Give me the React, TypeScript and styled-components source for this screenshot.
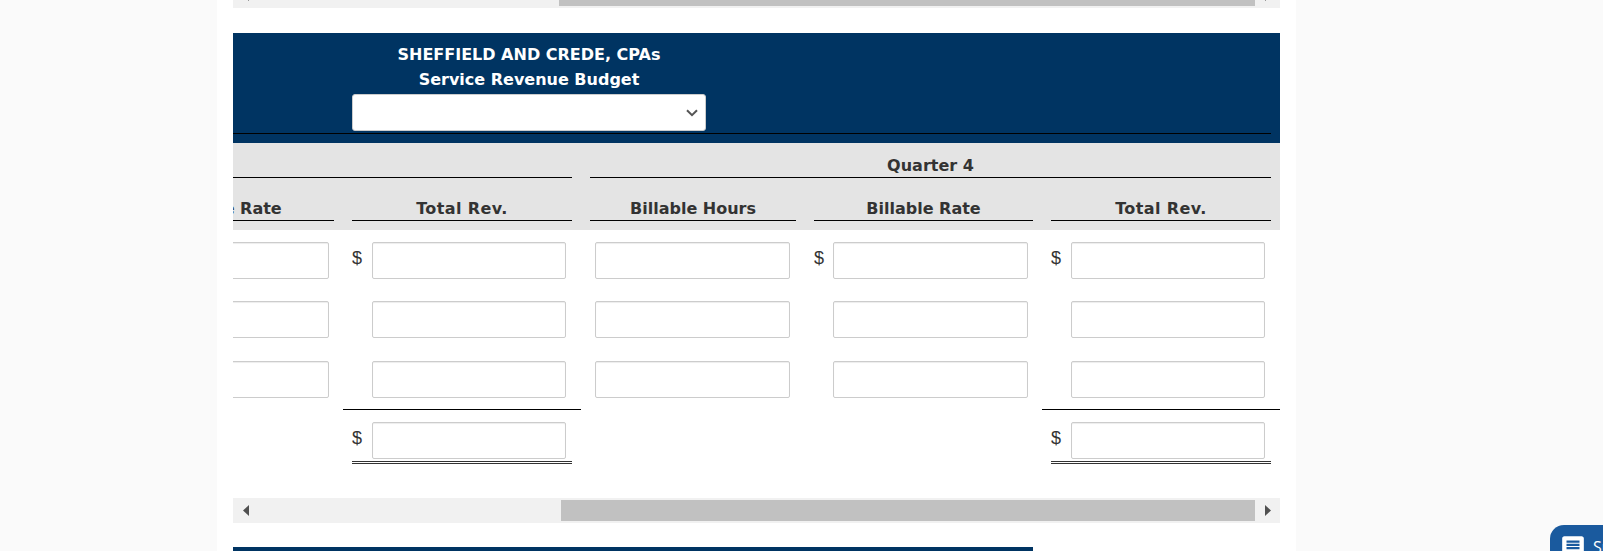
import React from 'react';
import styled, { createGlobalStyle } from 'styled-components';
import { MdMessage } from 'react-icons/md';

const GlobalStyle = createGlobalStyle`
  html, body {
    margin: 0;
    height: 100%;
    overflow: hidden;
    background: #fafafa;
  }
`;

const COLUMNS = '237px 238px 224px 237px 238px';

const Sheet = styled.div`
  width: 1047px;
  min-height: 620px;
  margin: -17px 0 0 217px;
  padding: 0 16px;
  background: #fff;
  font-family: "DejaVu Sans", Verdana, sans-serif;
  color: #333;
`;

const Track = styled.div<{ $top?: boolean }>`
  display: flex;
  height: 25px;
  background: #f1f1f1;
  margin-bottom: ${props => props.$top ? '25px' : '24px'};
`;

const ArrowButton = styled.div`
  flex: 0 0 25px;
  display: flex;
  align-items: center;
  justify-content: center;
`;

const ThumbLane = styled.div`
  flex: 1;
  padding: 2px 0;
  display: flex;
`;

const Thumb = styled.div<{ $offset: number }>`
  flex: 1;
  margin-left: ${props => props.$offset}px;
  background: #c1c1c1;
`;

const Banner = styled.div`
  background: #003462;
  padding: 9px 9px 9px 0;
`;

const BannerInner = styled.div`
  padding: 0 0 2px 119px;
  border-bottom: 1px solid #000;
`;

const TitleBlock = styled.div`
  width: 354px;
  color: #fff;
  font-size: 16px;
  font-weight: 700;
  line-height: 25px;
  text-align: center;
  white-space: nowrap;
  margin-bottom: 2px;
`;

const SelectWrap = styled.div`
  position: relative;
  width: 354px;
  height: 37px;
`;

const PeriodSelect = styled.select`
  display: block;
  appearance: none;
  box-sizing: border-box;
  width: 100%;
  height: 100%;
  background: #fff;
  border: 1px solid #ccc;
  border-radius: 3px;
`;

const Chevron = styled.svg`
  position: absolute;
  right: 8px;
  top: 15px;
  pointer-events: none;
`;

const Viewport = styled.div`
  width: 1047px;
  overflow: hidden;
`;

const Inner = styled.div`
  width: 1174px;
  margin-left: -127px;
`;

const HeadBand = styled.div`
  width: 1047px;
  background: #e4e4e4;
  padding: 11px 0 9px;
`;

const Row = styled.div`
  display: grid;
  grid-template-columns: ${COLUMNS};
`;

const QuarterRow = styled(Row)`
  margin-bottom: 19px;
`;

const HeadCell = styled.div<{ $span?: number }>`
  grid-column: span ${props => props.$span ?? 1};
  padding: 0 9px;
  min-width: 0;
`;

const HeadLabel = styled.div<{ $spread?: boolean }>`
  height: 23px;
  line-height: 23px;
  border-bottom: 1px solid #000;
  font-size: 16px;
  font-weight: 700;
  letter-spacing: ${props => props.$spread ? '0.4px' : '0'};
  text-align: center;
  white-space: nowrap;
  overflow: hidden;
`;

const Body = styled.div`
  padding-top: 12px;
  display: flex;
  flex-direction: column;
  gap: 22px;
  & > :nth-child(3) {
    margin-top: 1px;
  }
`;

const TotalRow = styled(Row)`
  margin-top: -11px;
  margin-bottom: 34px;
`;

const Cell = styled.div`
  padding: 0 9px;
`;

const TotalCell = styled(Cell)<{ $filled?: boolean }>`
  padding-top: 12px;
  border-top: ${props => props.$filled ? '1px solid #000' : '1px solid transparent'};
`;

const Field = styled.div<{ $lead: number; $trail: number; $doubled?: boolean }>`
  display: flex;
  align-items: center;
  padding-right: ${props => props.$trail}px;
  padding-bottom: ${props => props.$doubled ? '2px' : '0'};
  border-bottom: ${props => props.$doubled ? '3px double #333' : 'none'};
  & > span {
    flex: 0 0 ${props => props.$lead}px;
  }
`;

const Dollar = styled.span`
  font-family: "Liberation Sans", Arial, sans-serif;
  font-size: 18px;
  line-height: 33px;
  align-self: flex-start;
  color: #333;
`;

const Amount = styled.input`
  flex: 1;
  min-width: 0;
  box-sizing: border-box;
  height: 37px;
  padding: 0 8px;
  background: #fff;
  border: 1px solid #ccc;
  border-radius: 2px;
  box-shadow: inset 0 1px 1px rgba(0, 0, 0, 0.075);
`;

const Footer = styled.div`
  width: 800px;
  height: 60px;
  background: #003462;
`;

const ChatButton = styled.button`
  position: fixed;
  left: 1550px;
  top: 525px;
  width: 120px;
  height: 50px;
  display: flex;
  align-items: flex-start;
  gap: 7px;
  padding: 9px 0 0 10px;
  border: none;
  border-radius: 14px 0 0 0;
  background: #1a5a9e;
  color: #fff;
  font-family: "Open Sans", sans-serif;
  font-size: 16px;
  line-height: 26px;
  text-align: left;
`;

const thumbArrow = (dir: 'left' | 'right') => (
  <svg width="6" height="11" viewBox="0 0 6 11">
    <path d={dir === 'left' ? 'M6 0V11L0 5.5Z' : 'M0 0V11L6 5.5Z'} fill="#505050" />
  </svg>
);

const Scrollbar: React.FC<{ offset: number; top?: boolean }> = ({ offset, top }) => (
  <Track $top={top}>
    <ArrowButton>{thumbArrow('left')}</ArrowButton>
    <ThumbLane><Thumb $offset={offset} /></ThumbLane>
    <ArrowButton>{thumbArrow('right')}</ArrowButton>
  </Track>
);

// one row of inputs, money says whether the money columns show a dollar sign
const InputRow: React.FC<{ money?: boolean }> = ({ money }) => (
  <Row>
    <Cell>
      <Field $lead={19} $trail={5}><span /><Amount /></Field>
    </Cell>
    <Cell>
      <Field $lead={20} $trail={6}><Dollar>{money ? '$' : ''}</Dollar><Amount /></Field>
    </Cell>
    <Cell>
      <Field $lead={5} $trail={6}><span /><Amount /></Field>
    </Cell>
    <Cell>
      <Field $lead={19} $trail={5}><Dollar>{money ? '$' : ''}</Dollar><Amount /></Field>
    </Cell>
    <Cell>
      <Field $lead={20} $trail={6}><Dollar>{money ? '$' : ''}</Dollar><Amount /></Field>
    </Cell>
  </Row>
);

const App: React.FC = () => (
  <>
    <GlobalStyle />
    <Sheet>
      <Scrollbar offset={301} top />
      <Banner>
        <BannerInner>
          <TitleBlock>
            <div>SHEFFIELD AND CREDE, CPAs</div>
            <div>Service Revenue Budget</div>
          </TitleBlock>
          <SelectWrap>
            <PeriodSelect />
            <Chevron width="12" height="8" viewBox="0 0 12 8">
              <path d="M1 1.2L6 6.2L11 1.2" fill="none" stroke="#555" strokeWidth="2" />
            </Chevron>
          </SelectWrap>
        </BannerInner>
      </Banner>
      <Viewport>
        <HeadBand>
          <Inner>
            <QuarterRow>
              <HeadCell $span={2}><HeadLabel /></HeadCell>
              <HeadCell $span={3}><HeadLabel>Quarter 4</HeadLabel></HeadCell>
            </QuarterRow>
            <Row>
              <HeadCell><HeadLabel>Billable Rate</HeadLabel></HeadCell>
              <HeadCell><HeadLabel $spread>Total Rev.</HeadLabel></HeadCell>
              <HeadCell><HeadLabel>Billable Hours</HeadLabel></HeadCell>
              <HeadCell><HeadLabel>Billable Rate</HeadLabel></HeadCell>
              <HeadCell><HeadLabel $spread>Total Rev.</HeadLabel></HeadCell>
            </Row>
          </Inner>
        </HeadBand>
        <Inner>
          <Body>
            <InputRow money />
            <InputRow />
            <InputRow />
            <TotalRow>
              <TotalCell />
              <TotalCell $filled>
                <Field $lead={20} $trail={6} $doubled><Dollar>$</Dollar><Amount /></Field>
              </TotalCell>
              <TotalCell />
              <TotalCell />
              <TotalCell $filled>
                <Field $lead={20} $trail={6} $doubled><Dollar>$</Dollar><Amount /></Field>
              </TotalCell>
            </TotalRow>
          </Body>
        </Inner>
      </Viewport>
      <Scrollbar offset={303} />
      <Footer />
    </Sheet>
    <ChatButton>
      <MdMessage size={26} color="#fff" />
      Support
    </ChatButton>
  </>
);

export default App;
